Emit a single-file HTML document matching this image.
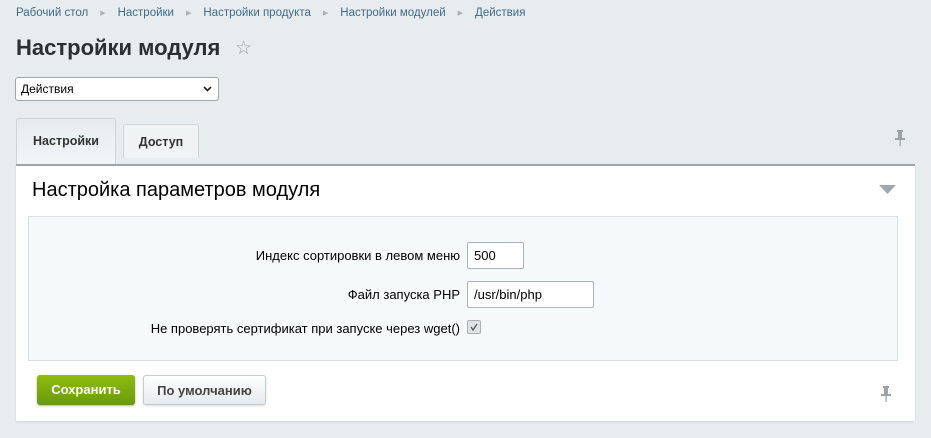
<!DOCTYPE html>
<html><head><meta charset="utf-8"><style>
body{margin:0;width:931px;height:438px;background:#e7ecee;font-family:"Liberation Sans",Arial,sans-serif;position:relative;overflow:hidden;color:#333}
.a{position:absolute}
.bc{top:7px;left:16px;font-size:11.5px;color:#3f6b8c;white-space:nowrap}
.bc span.s{color:#a8b2b8;font-size:7px;margin:0 12px;position:relative;top:-1px}
h1{position:absolute;margin:0;top:35px;left:16px;font-size:22px;font-weight:bold;color:#2a2f33}
.sel{left:15px;top:77px;width:204px;height:24px;background:#fff;border:1px solid #a0a7ab;border-radius:3px;box-sizing:border-box;font-size:12px;padding:4px 5px;color:#000}
.tab{font-size:12.5px;font-weight:bold;color:#333;text-align:center;box-sizing:border-box;border:1px solid #cfd6da;border-bottom:none;border-radius:3px 3px 0 0}
.panel{left:16px;top:164px;width:899px;height:257px;background:#fff;border-top:2px solid #9fa6aa;box-sizing:border-box;box-shadow:0 1px 2px rgba(0,0,0,.1)}
.lbl{font-size:13px;color:#000;text-align:right;width:460px;left:0}
.inp{background:#fff;border:1px solid #a9b3b8;border-radius:2px;box-sizing:border-box;font-size:13px;padding:5px 6px;color:#000}
.btn{top:375px;height:30px;border-radius:3px;font-size:13px;font-weight:bold;box-sizing:border-box;text-align:center;line-height:29px}
</style></head><body>
<div class="a bc">Рабочий стол<span class="s">▶</span>Настройки<span class="s">▶</span>Настройки продукта<span class="s">▶</span>Настройки модулей<span class="s">▶</span>Действия</div>
<h1>Настройки модуля</h1>
<div class="a" style="left:235px;top:37px;font-size:19px;color:#9aa3a8">☆</div>
<div class="a sel">Действия<svg class="a" style="right:6px;top:8px" width="9" height="6"><path d="M1 1l3.5 3.5L8 1" stroke="#222" stroke-width="1.6" fill="none"/></svg></div>
<div class="a tab" style="left:16px;top:118px;width:100px;height:47px;background:linear-gradient(#e6ecee,#f2f5f6);line-height:44px">Настройки</div>
<div class="a tab" style="left:123px;top:124px;width:76px;height:34px;background:#f0f3f4;line-height:34px">Доступ</div>
<svg class="a" style="left:894px;top:129px" width="12" height="18"><rect x="3" y="1" width="6" height="2" fill="#9aa3a8"/><rect x="4" y="3" width="4" height="6" fill="#9aa3a8"/><rect x="1" y="9" width="10" height="2" fill="#9aa3a8"/><rect x="5.5" y="11" width="1.2" height="6" fill="#9aa3a8"/></svg>
<div class="a panel"></div>
<div class="a" style="left:32px;top:179px;font-size:20px;color:#000">Настройка параметров модуля</div>
<svg class="a" style="left:879px;top:185px" width="17" height="10"><path d="M0 0h17l-8.5 9z" fill="#a0a8ad"/></svg>
<div class="a" style="left:28px;top:216px;width:870px;height:145px;background:#f5f9f9;border:1px solid #d8e0e3;box-sizing:border-box"></div>
<div class="a lbl" style="top:248px">Индекс сортировки в левом меню</div>
<div class="a inp" style="left:467px;top:242px;width:57px;height:27px">500</div>
<div class="a lbl" style="top:287px">Файл запуска PHP</div>
<div class="a inp" style="left:467px;top:281px;width:127px;height:27px">/usr/bin/php</div>
<div class="a lbl" style="top:321px">Не проверять сертификат при запуске через wget()</div>
<div class="a" style="left:467px;top:320px;width:14px;height:14px;background:#dfe3e5;border:1px solid #a9b0b4;border-radius:2px;box-sizing:border-box"><svg width="12" height="12" style="position:absolute;left:0;top:0"><path d="M3 6l2 3 4-6" stroke="#555" stroke-width="1.3" fill="none"/></svg></div>
<div class="a btn" style="left:37px;width:98px;background:linear-gradient(#8fbd12,#6a990a);color:#fff;box-shadow:0 1px 2px rgba(0,0,0,.3)">Сохранить</div>
<div class="a btn" style="left:143px;width:123px;background:linear-gradient(#fff,#e6eaec);border:1px solid #c5ccd0;color:#444;box-shadow:0 1px 2px rgba(0,0,0,.15)">По умолчанию</div>
<svg class="a" style="left:880px;top:385px" width="12" height="18"><rect x="3" y="1" width="6" height="2" fill="#9aa3a8"/><rect x="4" y="3" width="4" height="6" fill="#9aa3a8"/><rect x="1" y="9" width="10" height="2" fill="#9aa3a8"/><rect x="5.5" y="11" width="1.2" height="6" fill="#9aa3a8"/></svg>
</body></html>
